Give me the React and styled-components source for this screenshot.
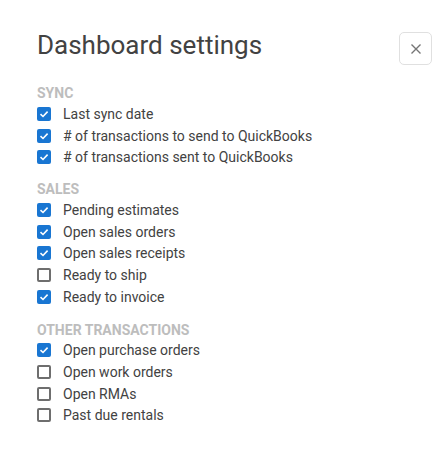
import styled, { createGlobalStyle } from "styled-components";

const GlobalStyle = createGlobalStyle`
  html, body {
    margin: 0;
    padding: 0;
    background: #ffffff;
  }
  body {
    font-family: Roboto, "Liberation Sans", Arial, sans-serif;
    color: #424242;
  }
`;

const Panel = styled.div`
  width: 439px;
  height: 458px;
  box-sizing: border-box;
  padding: 30px 7px 0 37px;
  background: #ffffff;
`;

const Header = styled.div`
  display: flex;
  justify-content: space-between;
  align-items: flex-start;
`;

const Title = styled.h1`
  margin: 0;
  font-size: 26px;
  font-weight: 400;
  line-height: 30px;
  color: #424242;
`;

const CloseButton = styled.button`
  width: 33px;
  height: 33px;
  margin-top: 2px;
  display: flex;
  align-items: center;
  justify-content: center;
  background: #ffffff;
  border: 1px solid #e0e0e0;
  border-radius: 5px;
  padding: 0;
  cursor: pointer;
`;

const Section = styled.div`
  margin-top: ${(p) => p.$top}px;
`;

const SectionTitle = styled.div`
  font-size: 14px;
  font-weight: 700;
  line-height: 16px;
  color: #bdbdbd;
  margin-bottom: 2px;
  text-transform: uppercase;
`;

const Row = styled.label`
  display: flex;
  align-items: center;
  height: 21.7px;
  gap: 12px;
  font-size: 14px;
  color: #424242;
  cursor: pointer;
`;

const Box = styled.span`
  width: 14px;
  height: 14px;
  box-sizing: border-box;
  border-radius: 2px;
  flex-shrink: 0;
  display: flex;
  align-items: center;
  justify-content: center;
  background: ${(p) => (p.$checked ? "#1976d2" : "#ffffff")};
  border: ${(p) => (p.$checked ? "none" : "2px solid #6e6e6e")};
`;

const sections = [
  {
    title: "Sync",
    top: 20,
    items: [
      ["Last sync date", true],
      ["# of transactions to send to QuickBooks", true],
      ["# of transactions sent to QuickBooks", true],
    ],
  },
  {
    title: "Sales",
    top: 13,
    items: [
      ["Pending estimates", true],
      ["Open sales orders", true],
      ["Open sales receipts", true],
      ["Ready to ship", false],
      ["Ready to invoice", true],
    ],
  },
  {
    title: "Other transactions",
    top: 14,
    items: [
      ["Open purchase orders", true],
      ["Open work orders", false],
      ["Open RMAs", false],
      ["Past due rentals", false],
    ],
  },
];

const Checkbox = ({ checked }) => (
  <Box $checked={checked}>
    {checked && (
      <svg width="10" height="10" viewBox="0 0 10 10">
        <path
          d="M1.5 5.2 L4 7.5 L8.6 2.6"
          fill="none"
          stroke="#ffffff"
          strokeWidth="1.6"
        />
      </svg>
    )}
  </Box>
);

const App = () => {
  return (
    <Panel>
      <GlobalStyle />
      <Header>
        <Title>Dashboard settings</Title>
        <CloseButton aria-label="Close">
          <svg width="12" height="12" viewBox="0 0 12 12">
            <path
              d="M1.5 1.5 L10.5 10.5 M10.5 1.5 L1.5 10.5"
              stroke="#757575"
              strokeWidth="1.4"
            />
          </svg>
        </CloseButton>
      </Header>
      {sections.map((s) => (
        <Section key={s.title} $top={s.top}>
          <SectionTitle>{s.title}</SectionTitle>
          {s.items.map(([label, checked]) => (
            <Row key={label}>
              <Checkbox checked={checked} />
              {label}
            </Row>
          ))}
        </Section>
      ))}
    </Panel>
  );
};

export default App;
